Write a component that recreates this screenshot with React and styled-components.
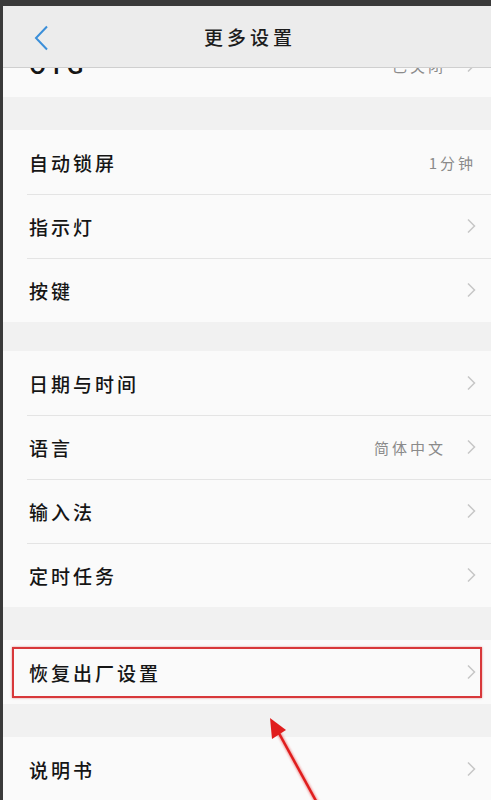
import React from 'react';
import styled, { createGlobalStyle } from 'styled-components';

const GlobalStyle = createGlobalStyle`
    html, body {
        margin: 0;
        padding: 0;
        background: #3a3a3a;
    }
    body {
        font-family: "Noto Sans CJK SC", "Noto Sans", sans-serif;
    }
`;

const Screen = styled.div`
    position: relative;
    width: 491px;
    height: 800px;
    box-sizing: border-box;
    border-top: 6px solid #3a3a3a;
    border-left: 3px solid #3a3a3a;
    background: #f1f1f1;
    overflow: hidden;
    display: flex;
    flex-direction: column;
`;

const Header = styled.header`
    position: relative;
    z-index: 2;
    height: 62px;
    flex-shrink: 0;
    display: flex;
    align-items: center;
    justify-content: center;
    background: #ececec;
    border-bottom: 1px solid #cfcfcf;
    box-sizing: border-box;
`;

const Back = styled.button`
    position: absolute;
    left: 28px;
    top: 18px;
    width: 20px;
    height: 28px;
    padding: 0;
    border: none;
    background: none;
    display: flex;
    align-items: center;
    justify-content: center;
`;

const Title = styled.h1`
    margin: 0 0 0 6px;
    font-size: 19px;
    font-weight: 500;
    letter-spacing: 4px;
    color: #1c1c1c;
`;

const Viewport = styled.div`
    flex: 1;
    overflow: hidden;
`;

const Scroller = styled.div`
    margin-top: -35px;
`;

const Group = styled.ul`
    margin: 0 0 ${p => p.$gap}px;
    padding: 0;
    list-style: none;
    background: #fafafa;
`;

const Row = styled.li`
    position: relative;
    height: 64px;
    display: flex;
    align-items: center;
    padding: 0 15px 0 26px;
    box-sizing: border-box;

    & + &::before {
        content: '';
        position: absolute;
        top: 0;
        left: 24px;
        right: 0;
        height: 1px;
        background: #e4e4e4;
    }
`;

const Label = styled.span`
    flex: 1;
    letter-spacing: 3px;
    font-weight: 500;
    color: #151515;
    font-family: ${p => (p.$latin ? '"Roboto", "Liberation Sans", sans-serif' : 'inherit')};
    font-size: ${p => (p.$latin ? '25px' : '19px')};
`;

const Value = styled.span`
    font-size: 15px;
    letter-spacing: 3px;
    color: #8a8a8a;
    margin-right: ${p => (p.$chevron ? '20px' : '0')};
`;

const Highlight = styled.div`
    position: absolute;
    left: 9px;
    right: 9px;
    top: 7px;
    bottom: 6px;
    border: 2px solid #d8383a;
    box-shadow: 0 0 2px rgba(200, 40, 40, 0.5);
    pointer-events: none;
`;

const Pointer = styled.svg`
    position: absolute;
    left: 250px;
    top: 700px;
    z-index: 3;
    overflow: visible;
`;

const Chevron = () => (
    <svg width="10" height="16" viewBox="0 0 10 16">
        <path d="M2 1.5 L8.5 8 L2 14.5" fill="none" stroke="#c6c6c6" strokeWidth="1.5" />
    </svg>
);

const BackIcon = () => (
    <svg width="15" height="26" viewBox="0 0 15 26">
        <path d="M13 1.5 L2 13 L13 24.5" fill="none" stroke="#3b8fd9" strokeWidth="2" />
    </svg>
);

const groups = [
    { gap: 33, items: [{ label: 'OTG', latin: true, value: '已关闭', chevron: true }] },
    {
        gap: 29,
        items: [
            { label: '自动锁屏', value: '1分钟' },
            { label: '指示灯', chevron: true },
            { label: '按键', chevron: true },
        ],
    },
    {
        gap: 33,
        items: [
            { label: '日期与时间', chevron: true },
            { label: '语言', value: '简体中文', chevron: true },
            { label: '输入法', chevron: true },
            { label: '定时任务', chevron: true },
        ],
    },
    { gap: 33, items: [{ label: '恢复出厂设置', chevron: true, marked: true }] },
    { gap: 0, items: [{ label: '说明书', chevron: true }] },
];

const App = () => {
    return (
        <>
            <GlobalStyle />
            <Screen>
                <Header>
                    <Back aria-label="返回">
                        <BackIcon />
                    </Back>
                    <Title>更多设置</Title>
                </Header>
                <Viewport>
                    <Scroller>
                        {groups.map((g, gi) => (
                            <Group key={gi} $gap={g.gap}>
                                {g.items.map(item => (
                                    <Row key={item.label}>
                                        <Label $latin={item.latin}>{item.label}</Label>
                                        {item.value && <Value $chevron={item.chevron}>{item.value}</Value>}
                                        {item.chevron && <Chevron />}
                                        {item.marked && <Highlight />}
                                    </Row>
                                ))}
                            </Group>
                        ))}
                    </Scroller>
                </Viewport>
                <Pointer width="80" height="110" viewBox="0 0 80 110">
                    <defs>
                        <filter id="glow" x="-50%" y="-50%" width="200%" height="200%">
                            <feGaussianBlur stdDeviation="1" />
                        </filter>
                    </defs>
                    <g filter="url(#glow)" opacity="0.5">
                        <line x1="68" y1="104" x2="22" y2="20" stroke="#e43030" strokeWidth="4" />
                    </g>
                    <line x1="68" y1="104" x2="22" y2="20" stroke="#e01d1d" strokeWidth="2.5" />
                    <polygon points="17,12 19,33 33,24" fill="#e01d1d" />
                </Pointer>
            </Screen>
        </>
    );
};

export default App;
